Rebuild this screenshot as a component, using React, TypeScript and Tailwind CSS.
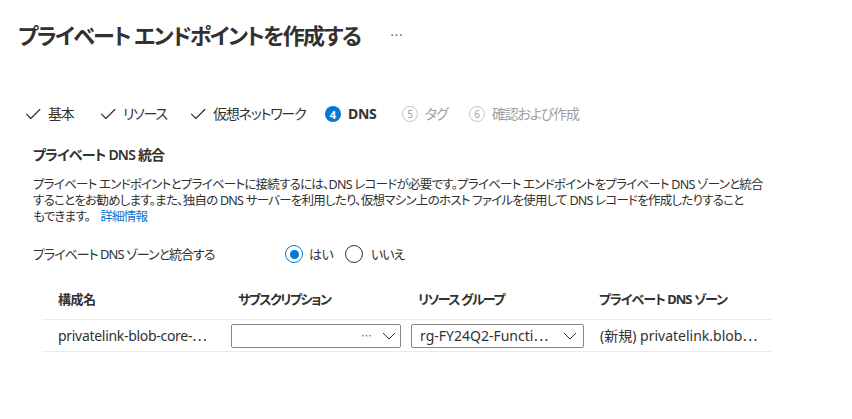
import React from "react";

const Check = () => (
  <svg width="16" height="16" viewBox="0 0 16 16" fill="none">
    <path d="M1.5 8.2 L5.8 12.5 L14.8 3.5" stroke="#323130" strokeWidth="1.2" strokeLinecap="round" strokeLinejoin="round" />
  </svg>
);

const Chevron = () => (
  <svg width="14" height="8" viewBox="0 0 14 8" fill="none">
    <path d="M1 1 L7 7 L13 1" stroke="#323130" strokeWidth="1" strokeLinejoin="round" />
  </svg>
);

const Ell = () => (
  <span style={{ fontFamily: '"Noto Sans CJK JP", sans-serif' }}>⋯</span>
);

const Done = ({ label, w }: { label: string; w: string }) => (
  <div className="flex items-center gap-[7px]">
    <Check />
    <span className={`${w} whitespace-nowrap`}>{label}</span>
  </div>
);

const Step = ({ n, label, active, w }: { n: string; label: string; active?: boolean; w: string }) => (
  <div className="flex items-center gap-[7px]">
    {active ? (
      <span className="flex h-4 w-4 items-center justify-center rounded-full bg-[#0078d4] text-[11px] font-bold leading-none tracking-normal text-white">{n}</span>
    ) : (
      <span className="flex h-4 w-4 items-center justify-center rounded-full border border-[#c8c6c4] text-[10px] leading-none tracking-normal text-[#a19f9d]">{n}</span>
    )}
    <span className={`${w} whitespace-nowrap ${active ? "font-bold tracking-[-0.3px] text-[#323130]" : "text-[#a19f9d]"}`}>{label}</span>
  </div>
);

export default function App() {
  return (
    <div
      className="h-[419px] w-[852px] overflow-hidden bg-white text-[#323130] [font-feature-settings:'palt']"
      style={{ fontFamily: '"Noto Sans", "Noto Sans CJK JP", sans-serif' }}
    >
      <div className="flex items-center pl-[18px] pt-[19px]">
        <h1 className="h-8 w-[344px] whitespace-nowrap text-[22px] font-semibold leading-8 tracking-[-1.6px]">プライベート エンドポイントを作成する</h1>
        <span className="ml-[28px] text-[13px] leading-8 text-[#605e5c]">
          <Ell />
        </span>
      </div>

      <div className="mt-[53px] flex h-5 items-center gap-[23px] pl-[25px] text-[14px] leading-5 tracking-[-1.2px]">
        <Done label="基本" w="w-[29px]" />
        <Done label="リソース" w="w-[44px]" />
        <Done label="仮想ネットワーク" w="w-[89px]" />
        <Step n="4" label="DNS" active w="w-[31px]" />
        <Step n="5" label="タグ" w="w-[21px]" />
        <Step n="6" label="確認および作成" w="w-[90px]" />
      </div>

      <div className="mt-[21px] pl-[33px] text-[14px] font-semibold leading-5 tracking-[-0.8px]">プライベート DNS 統合</div>

      <p className="mt-3 whitespace-nowrap pl-[33px] text-[12.5px] leading-4 tracking-[-0.75px]">
        プライベート エンドポイントとプライベートに接続するには、DNS レコードが必要です。プライベート エンドポイントをプライベート DNS ゾーンと統合
        <br />
        することをお勧めします。また、独自の DNS サーバーを利用したり、仮想マシン上のホスト ファイルを使用して DNS レコードを作成したりすること
        <br />
        もできます。<span className="ml-[10px] inline-block text-[#0078d4]">詳細情報</span>
      </p>

      <div className="mt-[19px] flex h-5 items-center pl-[33px] text-[13px] leading-5">
        <span className="w-[252px] whitespace-nowrap tracking-[-1px]">プライベート DNS ゾーンと統合する</span>
        <div className="flex items-center gap-[6px]">
          <span className="flex h-[18px] w-[18px] items-center justify-center rounded-full border border-[#0078d4]">
            <span className="h-[9px] w-[9px] rounded-full bg-[#0078d4]" />
          </span>
          <span className="w-[30px] tracking-[-0.5px]">はい</span>
        </div>
        <div className="ml-[6px] flex items-center gap-2">
          <span className="h-[18px] w-[18px] rounded-full border border-[#323130]" />
          <span className="tracking-[-1px]">いいえ</span>
        </div>
      </div>

      <div className="ml-[42px] mt-[17px] w-[730px] text-[13px]">
        <div className="grid h-[39px] grid-cols-[184px_180px_180px_186px] items-center border-b border-[#edebe9] font-bold tracking-[-1.5px]">
          <span className="pl-4 tracking-[-0.5px]">構成名</span>
          <span className="pl-3">サブスクリプション</span>
          <span className="pl-3">リソース グループ</span>
          <span className="pl-[13px] tracking-[-1px]">プライベート DNS ゾーン</span>
        </div>
        <div className="grid h-[32px] grid-cols-[184px_180px_180px_186px] items-center border-b border-[#edebe9]">
          <span className="whitespace-nowrap pl-4 text-[14px] tracking-[-0.3px]">
            privatelink-blob-core-<Ell />
          </span>
          <div className="pl-[5px]">
            <div className="flex h-6 w-[170px] items-center justify-end rounded-[2px] border border-[#8a8886] pr-[4px]">
              <span className="mr-[10px] text-[11px] text-[#605e5c]">
                <Ell />
              </span>
              <Chevron />
            </div>
          </div>
          <div className="pl-[5px]">
            <div className="flex h-6 w-[173px] items-center justify-between rounded-[2px] border border-[#8a8886] pl-2 pr-[6px]">
              <span className="whitespace-nowrap text-[14px]">
                rg-FY24Q2-Functi<Ell />
              </span>
              <Chevron />
            </div>
          </div>
          <span className="whitespace-nowrap pl-[14px] text-[14px]">
            (新規) privatelink.blob<Ell />
          </span>
        </div>
      </div>
    </div>
  );
}
